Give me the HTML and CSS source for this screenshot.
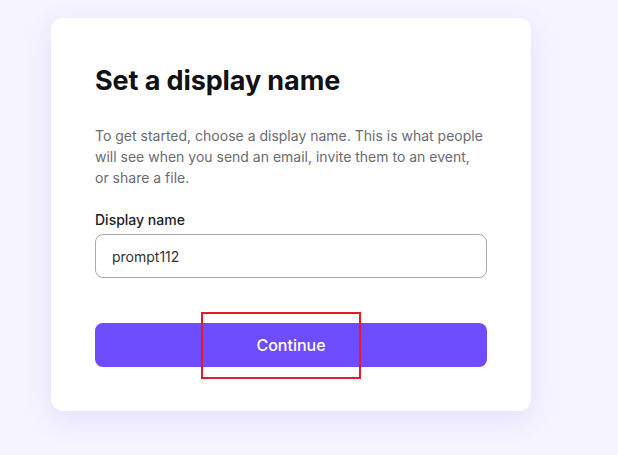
FILE: index.html
```html
<!DOCTYPE html>
<html>
<head>
<meta charset="utf-8">
<link rel="stylesheet" href="styles.css">
</head>
<body>
<div class="page">
  <div class="card">
    <h1 class="title">Set a display name</h1>
    <p class="desc">To get started, choose a display name. This is what people will see when you send an email, invite them to an event, or share a file.</p>
    <label class="label" for="dn">Display name</label>
    <input class="input" id="dn" type="text" value="prompt112">
    <button class="btn">Continue</button>
  </div>
</div>
<div class="highlight"></div>
</body>
</html>
```
FILE: styles.css
```css
* { box-sizing: border-box; }
html, body { margin: 0; padding: 0; }
body {
  background: #f6f4ff;
  font-family: Inter, "Noto Sans", sans-serif;
  width: 618px;
  height: 455px;
  overflow: hidden;
  position: relative;
}
.page {
  padding: 18px 0 0 51px;
}
.card {
  width: 480px;
  background: #fff;
  border-radius: 12px;
  padding: 46px 44px 44px 44px;
  box-shadow: 0 8px 28px rgba(110, 90, 240, 0.14);
  display: flex;
  flex-direction: column;
}
.title {
  margin: 0;
  font-size: 27px;
  font-weight: 700;
  color: #111116;
  letter-spacing: -0.1px;
  line-height: 34px;
}
.desc {
  margin: 27px 0 0 0;
  font-size: 14px;
  line-height: 21px;
  color: #6b6b70;
}
.label {
  margin-top: 23px;
  font-size: 14px;
  font-weight: 500;
  color: #222;
  line-height: 18px;
}
.input {
  margin-top: 5px;
  height: 44px;
  width: 100%;
  border: 1px solid #a9a9ad;
  border-radius: 8px;
  padding: 0 16px;
  font-family: Inter, "Noto Sans", sans-serif;
  font-size: 14px;
  color: #333;
  outline: none;
  background: #fff;
}
.btn {
  margin-top: 45px;
  height: 44px;
  width: 100%;
  border: none;
  border-radius: 8px;
  background: #6e4cff;
  color: #fff;
  font-family: Inter, "Noto Sans", sans-serif;
  font-size: 16px;
  font-weight: 500;
}
.highlight {
  position: absolute;
  left: 201px;
  top: 312px;
  width: 160px;
  height: 67px;
  border: 2px solid #e8192c;
}
```
